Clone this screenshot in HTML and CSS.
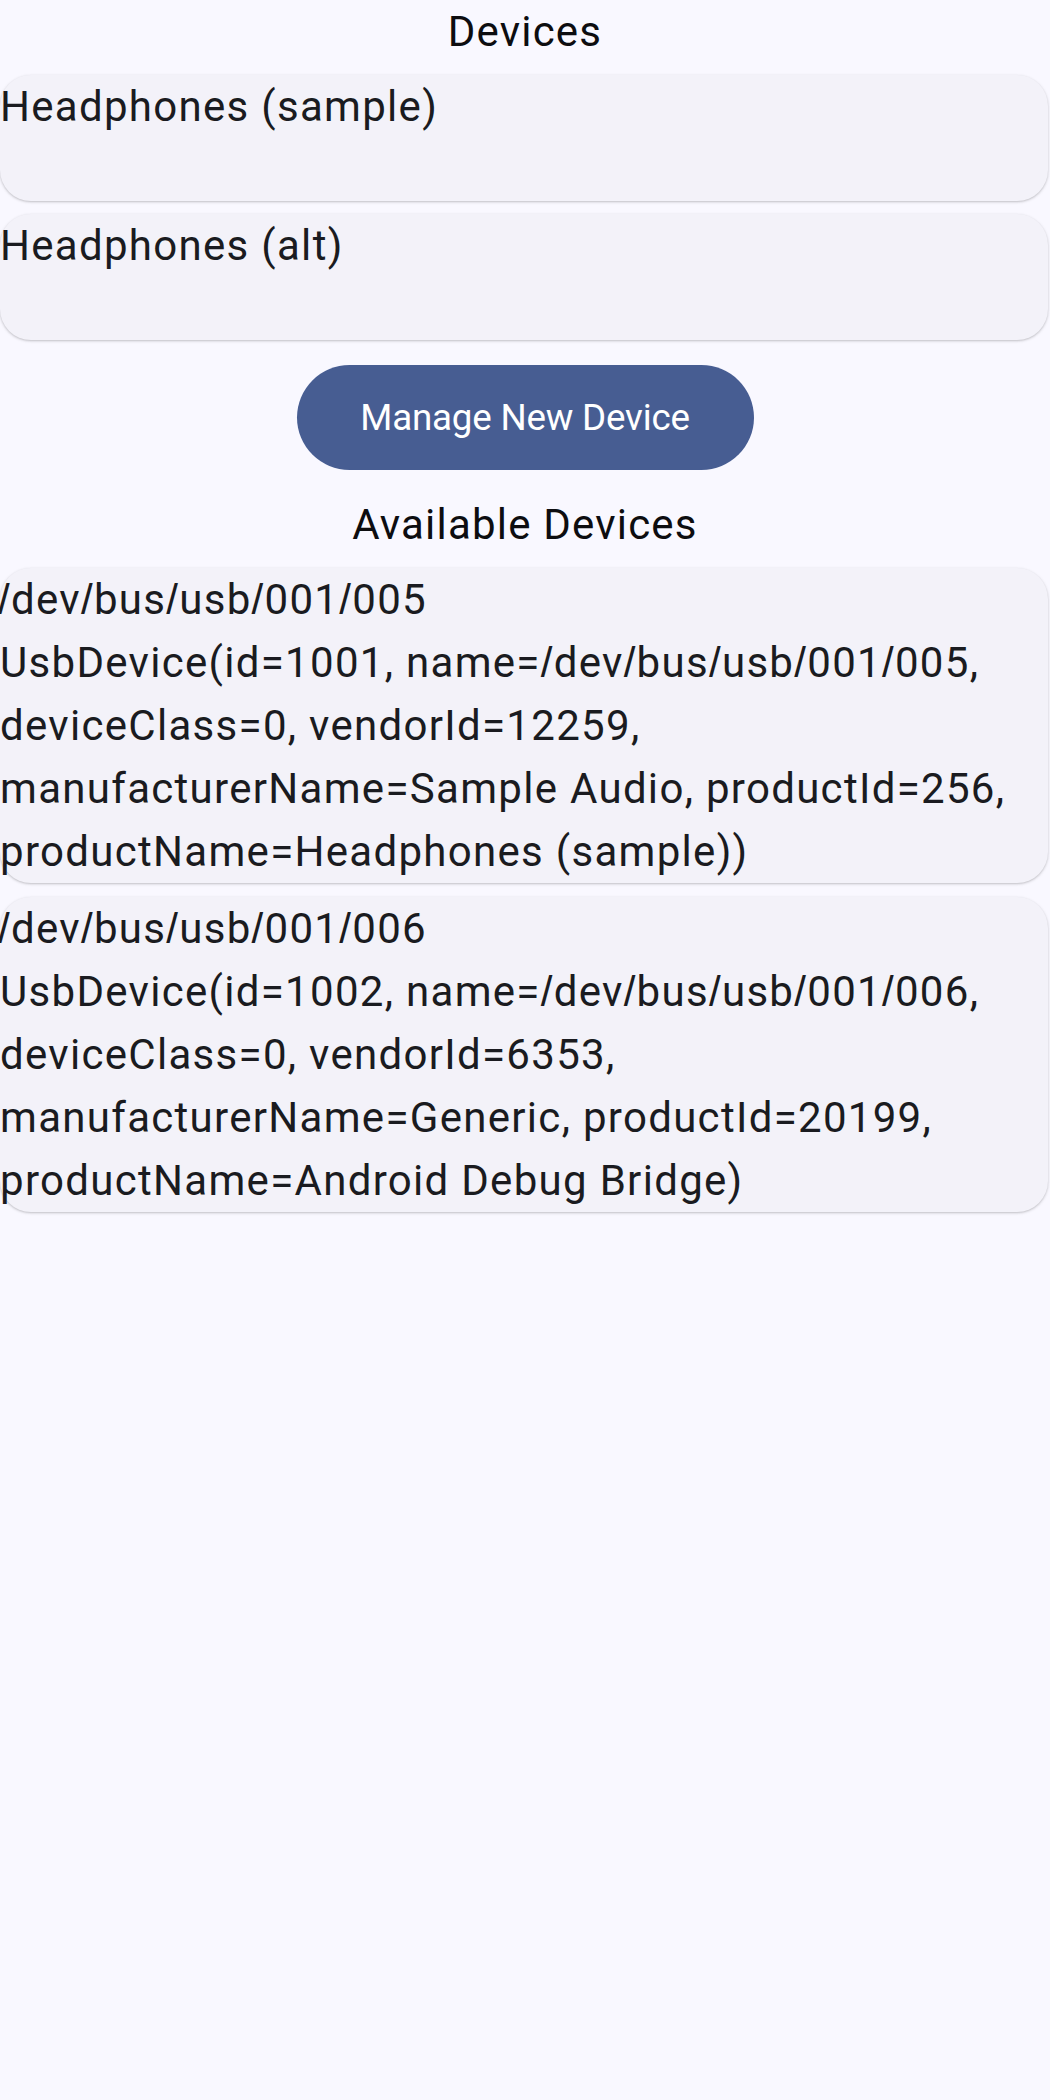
FILE: index.html
```html
<!DOCTYPE html>
<html>
<head>
<meta charset="utf-8">
<link rel="stylesheet" href="styles.css">
</head>
<body>
<main class="screen">
  <h1 class="heading">Devices</h1>
  <section class="list">
    <div class="card card-short">Headphones (sample)</div>
    <div class="card card-short">Headphones (alt)</div>
  </section>
  <div class="action">
    <button class="btn">Manage New Device</button>
  </div>
  <h2 class="heading">Available Devices</h2>
  <section class="list list-usb">
    <div class="card"><span class="sl sl-first">/</span>dev<span class="sl">/</span>bus<span class="sl">/</span>usb<span class="sl">/</span>001<span class="sl">/</span>005<br>UsbDevice(id=1001, name=<span class="sl">/</span>dev<span class="sl">/</span>bus<span class="sl">/</span>usb<span class="sl">/</span>001<span class="sl">/</span>005, deviceClass=0, vendorId=12259, manufacturerName=Sample Audio, productId=256, productName=Headphones (sample))</div>
    <div class="card"><span class="sl sl-first">/</span>dev<span class="sl">/</span>bus<span class="sl">/</span>usb<span class="sl">/</span>001<span class="sl">/</span>006<br>UsbDevice(id=1002, name=<span class="sl">/</span>dev<span class="sl">/</span>bus<span class="sl">/</span>usb<span class="sl">/</span>001<span class="sl">/</span>006, deviceClass=0, vendorId=6353, manufacturerName=Generic, productId=20199, productName=Android Debug Bridge)</div>
  </section>
</main>
</body>
</html>
```
FILE: styles.css
```css
html, body {
  margin: 0;
  padding: 0;
  background: #f9f8ff;
}
body {
  font-family: Roboto, "Noto Sans", sans-serif;
  color: #1a1b20;
  width: 1050px;
  min-height: 2100px;
}
.screen {
  display: flex;
  flex-direction: column;
}
.heading {
  margin: 0;
  font-size: 42px;
  font-weight: 400;
  line-height: 63px;
  letter-spacing: 1.2px;
  text-align: center;
  color: #0d0d10;
}
.list {
  display: flex;
  flex-direction: column;
  gap: 13px;
  margin-top: 12px;
  padding-right: 2px;
}
.list-usb {
  gap: 14px;
}
.card {
  background: #f3f2f9;
  border-radius: 31px;
  box-shadow: 0 1px 2px rgba(0, 0, 0, 0.16), 0 1px 3px 1px rgba(0, 0, 0, 0.06);
  font-size: 42px;
  line-height: 63px;
  letter-spacing: 1.3px;
  color: #1a1b20;
  overflow-wrap: break-word;
}
.card-short {
  min-height: 126px;
}
.sl {
  font-family: "Liberation Sans", Roboto, sans-serif;
}
.sl-first {
  margin-left: -2px;
}
.action {
  display: flex;
  justify-content: center;
  margin: 25px 0 23px;
}
.btn {
  height: 105px;
  width: 457px;
  border: none;
  border-radius: 53px;
  background: #475d92;
  color: #ffffff;
  font-family: Roboto, "Noto Sans", sans-serif;
  font-size: 36.75px;
  font-weight: 400;
  letter-spacing: -0.2px;
  padding: 0;
}
```
